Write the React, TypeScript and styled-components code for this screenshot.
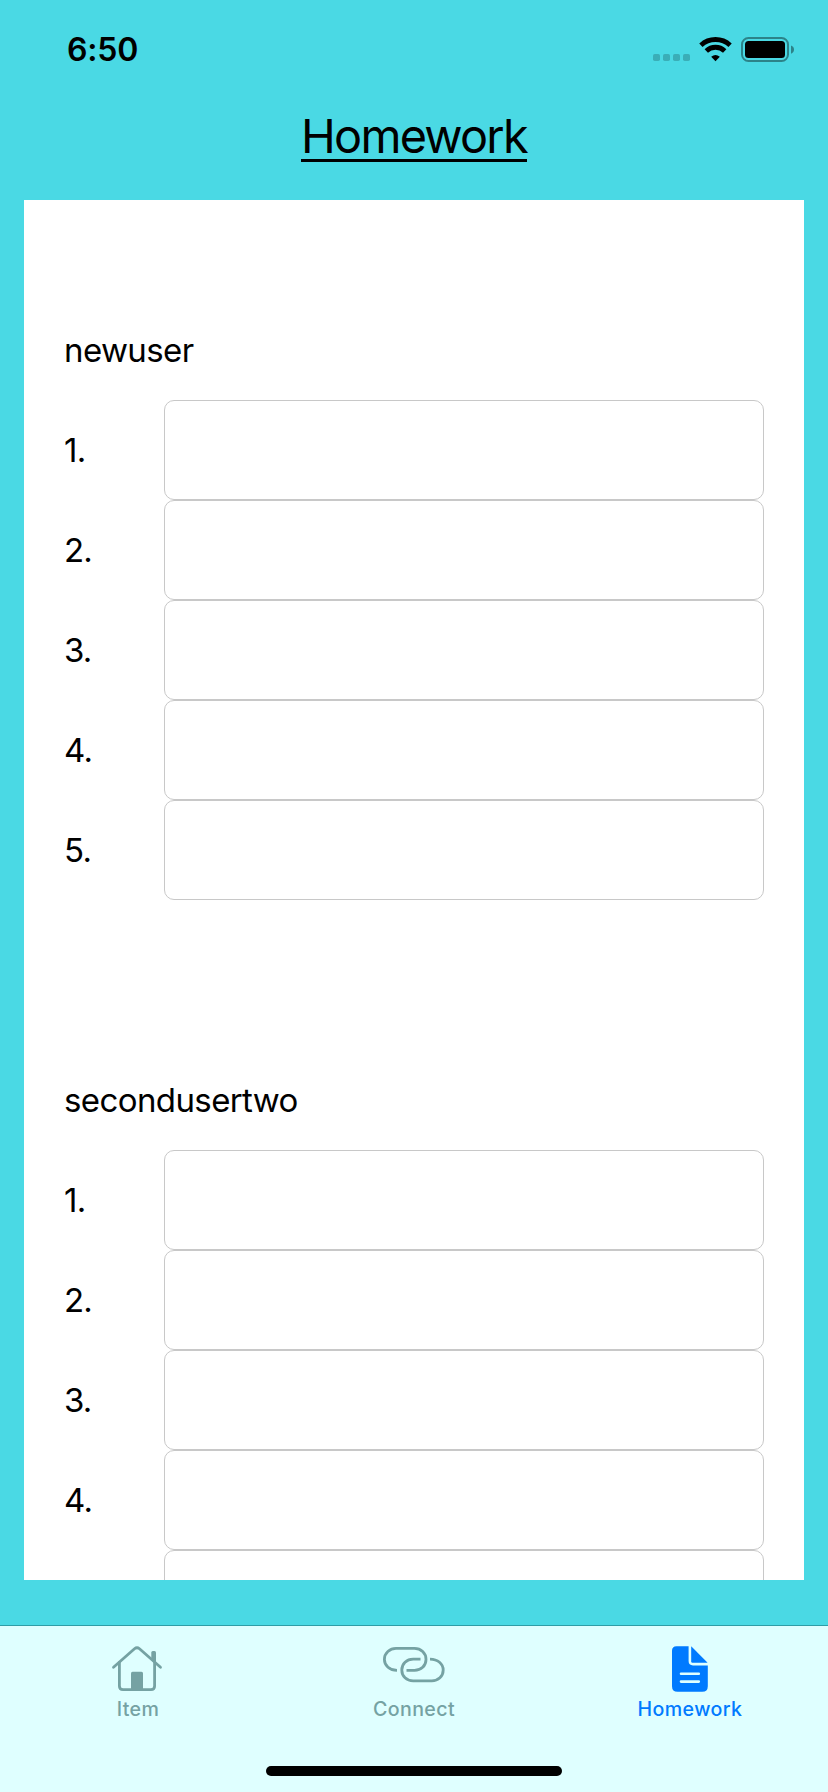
import React from "react";
import styled, { createGlobalStyle } from "styled-components";

const GlobalStyle = createGlobalStyle`
  * { box-sizing: border-box; }
  body { margin: 0; background: #4ad9e4; }
`;

const Screen = styled.div`
  width: 828px;
  height: 1792px;
  display: flex;
  flex-direction: column;
  overflow: hidden;
  background: #4ad9e4;
  color: #000;
  font-family: Inter, "Liberation Sans", sans-serif;
`;

const StatusBar = styled.header`
  height: 88px;
  flex: none;
  display: flex;
  justify-content: space-between;
  padding: 29px 32px 0 67px;
`;

const Clock = styled.time`
  font-size: 32px;
  line-height: 42px;
  font-weight: 600;
  letter-spacing: -0.2px;
`;

const StatusIcons = styled.svg`
  width: 144px;
  height: 28px;
  margin-top: 7px;
`;

const Title = styled.h1`
  margin: 0;
  height: 112px;
  flex: none;
  display: flex;
  justify-content: center;
  padding-top: 20px;
`;

const TitleText = styled.span`
  height: 54px;
  line-height: 56px;
  font-size: 46.8px;
  font-weight: 400;
  letter-spacing: -1.75px;
  border-bottom: 3px solid #000;
`;

const Panel = styled.main`
  height: 1380px;
  flex: none;
  margin: 0 24px;
  padding: 100px 40px 0;
  display: flex;
  flex-direction: column;
  gap: 150px;
  overflow: hidden;
  background: #fff;
`;

const Group = styled.section`
  flex: none;
`;

const GroupName = styled.h2`
  margin: 0;
  height: 100px;
  line-height: 100px;
  font-size: 33px;
  font-weight: 400;
  letter-spacing: -0.6px;
`;

const Row = styled.label`
  display: flex;
  height: 100px;
`;

const RowNumber = styled.span`
  width: 100px;
  line-height: 100px;
  font-size: 33px;
  letter-spacing: -0.8px;
`;

const Field = styled.input`
  width: 600px;
  height: 100px;
  padding: 0 16px;
  border: 1px solid #c8c8c8;
  border-radius: 10px;
  background: #fff;
  font: inherit;
  font-size: 33px;
  outline: none;
`;

const TabBar = styled.nav`
  flex: 1;
  margin-top: 45px;
  border-top: 1px solid #2f9da6;
  background: #dfffff;
  display: flex;
  flex-direction: column;
  align-items: center;
`;

const Tabs = styled.div`
  width: 100%;
  display: flex;
  height: 140px;
`;

const Tab = styled.a<{ $active?: boolean }>`
  flex: 1;
  display: flex;
  flex-direction: column;
  align-items: center;
  padding-top: 14px;
  color: ${(p) => (p.$active ? "#007aff" : "#75a2a3")};
`;

const TabIcon = styled.svg`
  width: 64px;
  height: 56px;
`;

const TabLabel = styled.span`
  font-size: 19.6px;
  font-weight: 500;
  line-height: 26px;
  letter-spacing: 0.4px;
`;

const HomeIndicator = styled.div`
  width: 296px;
  height: 10px;
  border-radius: 5px;
  background: #000;
`;

const HouseIcon = () => (
  <TabIcon viewBox="2 0 64 56" fill="none" stroke="currentColor" strokeWidth="2.8" strokeLinecap="round" strokeLinejoin="round">
    <path d="M9.5 27.3 L30.5 8.8 Q33 6.7 35.5 8.8 L56.5 27.3" />
    <path d="M15.4 22.5 V46 Q15.4 49.6 19 49.6 H47 Q50.6 49.6 50.6 46 V22.5" />
    <path fill="currentColor" stroke="none" d="M47.3 18.5 V12.5 Q47.3 11 48.8 11 H50.5 Q52 11 52 12.5 V23 Z" />
    <path fill="currentColor" stroke="none" d="M27 50 V33.2 Q27 31.7 28.5 31.7 H37.5 Q39 31.7 39 33.2 V50 Z" />
  </TabIcon>
);

const ChainIcon = () => (
  <TabIcon viewBox="0 0 64 56" fill="none" stroke="currentColor" strokeWidth="2.8">
    <path d="M15 30.4 C7.8 30.4 2.4 25.5 2.4 19.4 C2.4 13 7.8 8.4 14 8.4 H32.5 C39 8.4 44 13 44 19.4 C44 25.8 39 30.4 32.5 30.4 H24.5" />
    <path d="M48 19.1 C55.8 19.1 61.2 24 61.2 30 C61.2 36.4 56.2 40.9 49.8 40.9 H31.2 C24.6 40.9 19.8 36.4 19.8 30 C19.8 23.6 24.6 19.1 31.2 19.1 H38.5" />
  </TabIcon>
);

const DocumentIcon = () => (
  <TabIcon viewBox="0 0 64 56" fill="currentColor">
    <path d="M18.5 6.2 H30.6 V21 Q30.6 25.4 35 25.4 H49.8 V46.2 Q49.8 51.8 44.2 51.8 H19.6 Q14 51.8 14 46.2 V10.7 Q14 6.2 18.5 6.2 Z" />
    <path d="M33.2 6.2 L49.6 22.8 H34.4 Q33.2 22.8 33.2 21.6 Z" />
    <path d="M23 33.7 H40.8 M23 41.6 H40.8" stroke="#dfffff" strokeWidth="2.6" strokeLinecap="round" />
  </TabIcon>
);

const groups = ["newuser", "secondusertwo"];
const numbers = [1, 2, 3, 4, 5];

export default function App() {
  return (
    <Screen>
      <GlobalStyle />
      <StatusBar>
        <Clock>6:50</Clock>
        <StatusIcons viewBox="0 0 144 28">
          <g fill="#3aaeb7">
            <rect x="1" y="18" width="7" height="7" rx="1.8" />
            <rect x="11" y="18" width="7" height="7" rx="1.8" />
            <rect x="21" y="18" width="7" height="7" rx="1.8" />
            <rect x="31" y="18" width="7" height="7" rx="1.8" />
          </g>
          <g fill="none" stroke="#000" strokeWidth="4.8">
            <path d="M48.9 9.2 A21.5 21.5 0 0 1 78.1 9.2" />
            <path d="M54.3 15 A13.2 13.2 0 0 1 72.7 15" />
          </g>
          <path d="M63.5 25.2 L59.2 20.8 Q63.5 17 67.8 20.8 Z" />
          <rect x="90" y="2" width="46" height="23" rx="6.5" fill="none" stroke="#2c8389" strokeWidth="2" />
          <rect x="93" y="5" width="40" height="17" rx="3.5" />
          <path d="M139 9.5 Q142 10.5 142 13.6 Q142 16.7 139 17.7 Z" fill="#2c8389" />
        </StatusIcons>
      </StatusBar>
      <Title>
        <TitleText>Homework</TitleText>
      </Title>
      <Panel>
        {groups.map((name) => (
          <Group key={name}>
            <GroupName>{name}</GroupName>
            {numbers.map((n) => (
              <Row key={n}>
                <RowNumber>{n}.</RowNumber>
                <Field />
              </Row>
            ))}
          </Group>
        ))}
      </Panel>
      <TabBar>
        <Tabs>
          <Tab>
            <HouseIcon />
            <TabLabel>Item</TabLabel>
          </Tab>
          <Tab>
            <ChainIcon />
            <TabLabel>Connect</TabLabel>
          </Tab>
          <Tab $active>
            <DocumentIcon />
            <TabLabel>Homework</TabLabel>
          </Tab>
        </Tabs>
        <HomeIndicator />
      </TabBar>
    </Screen>
  );
}
